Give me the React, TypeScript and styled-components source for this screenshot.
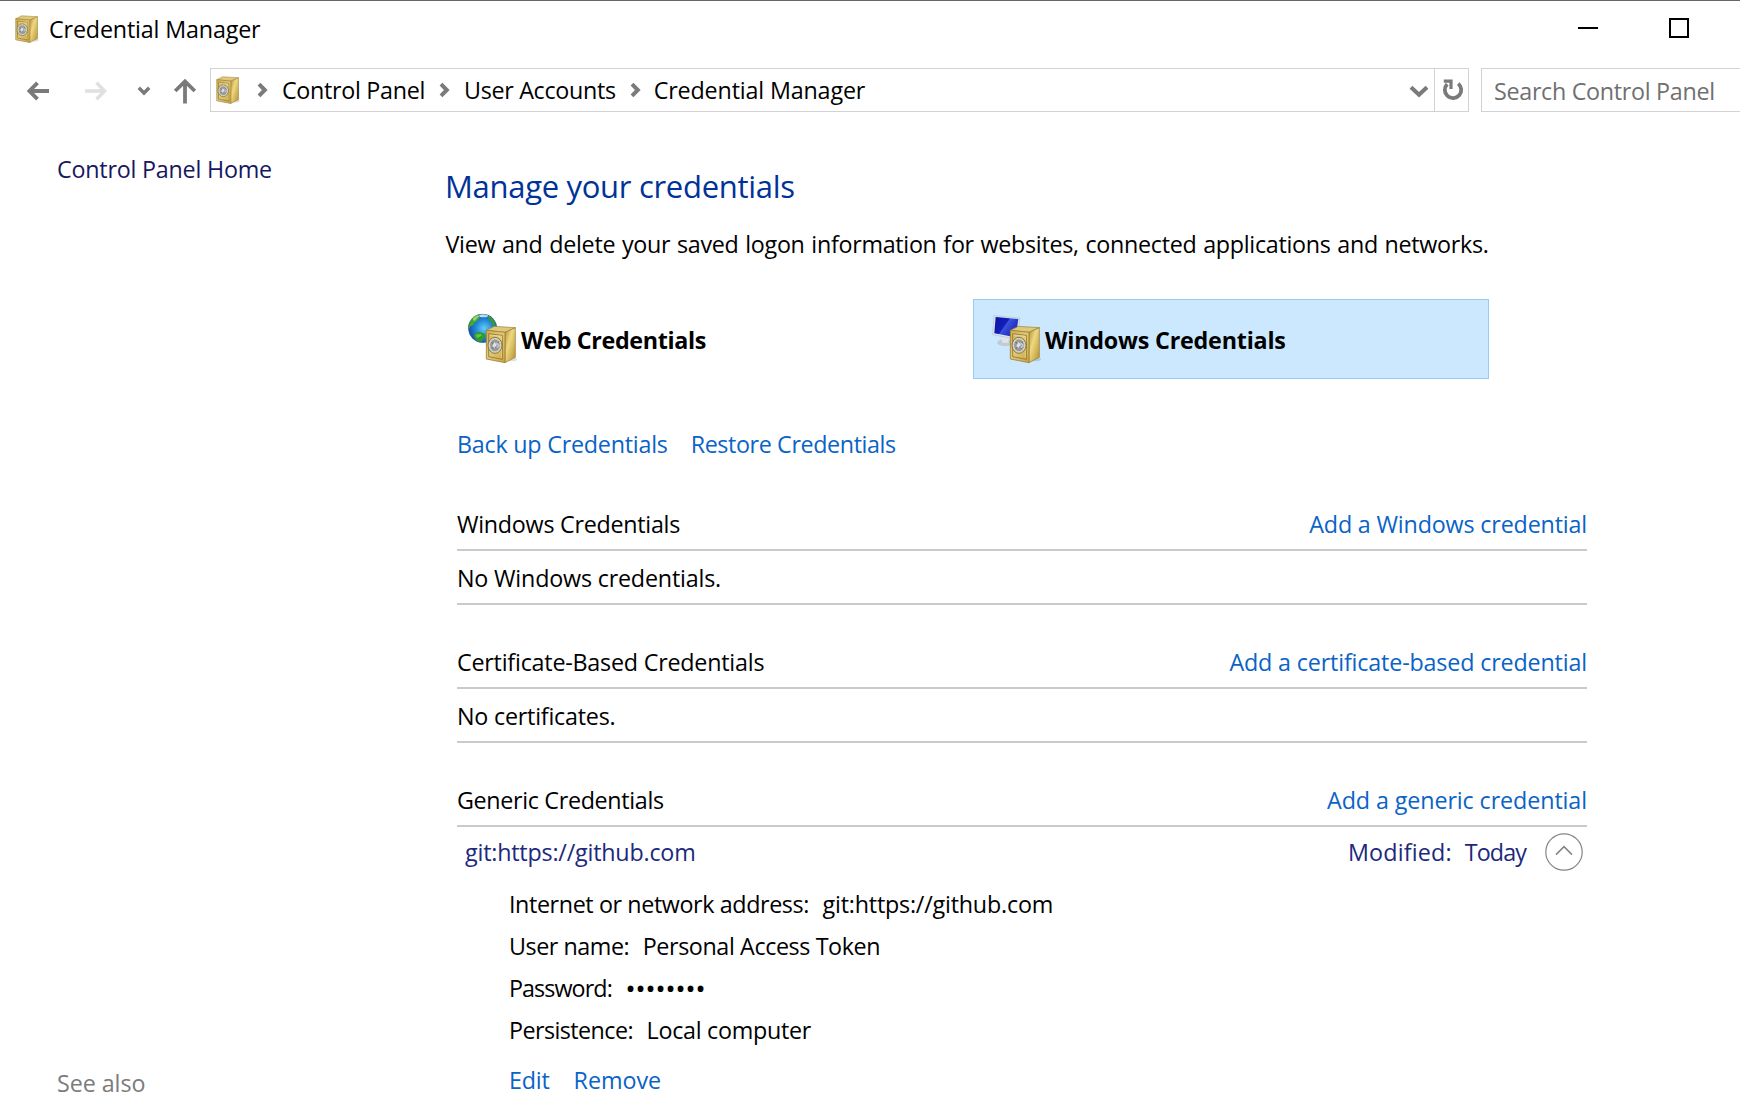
import React from 'react';
import styled, { createGlobalStyle, css } from 'styled-components';

const GlobalStyle = createGlobalStyle`
  * { box-sizing: border-box; }
  html, body { margin: 0; padding: 0; background: #fff; overflow: hidden; }
`;

const Window = styled.div`
  width: 1740px;
  height: 1108px;
  overflow: hidden;
  display: flex;
  flex-direction: column;
  background: #fff;
  border-top: 1px solid #666;
  color: #000;
  font-family: 'Open Sans', 'Noto Sans', sans-serif;
  font-size: 23.3px;
  line-height: 32px;
  white-space: pre;
`;

const Label = styled.span<{ $track?: number; $ml?: number }>`
  letter-spacing: ${(p) => p.$track ?? -0.2}px;
  margin-left: ${(p) => p.$ml ?? 0}px;
`;

const TitleBar = styled.header`
  height: 67px;
  flex: none;
  display: flex;
  align-items: flex-start;
  padding: 12px 51px 0 15px;
`;

const TitleIcon = styled.div`
  display: flex;
  padding-top: 2px;
  margin-right: 9px;
`;

const WindowButtons = styled.div`
  margin-left: auto;
  display: flex;
  gap: 71px;
  padding-top: 5px;
`;

const Minimize = styled.div`
  width: 20px;
  height: 11px;
  border-bottom: 2px solid #000;
`;

const Maximize = styled.div`
  width: 20px;
  height: 20px;
  border: 2px solid #000;
`;

const AddressRow = styled.nav`
  height: 44px;
  flex: none;
  display: flex;
  align-items: stretch;
`;

const NavButtons = styled.div`
  width: 210px;
  flex: none;
  display: flex;
  align-items: center;
  padding: 2px 0 0 26px;
`;

const Glyph = styled.svg<{ $ml?: number; $tone?: string }>`
  display: block;
  flex: none;
  fill: none;
  stroke: ${(p) => p.$tone ?? '#7a7a7a'};
  margin-left: ${(p) => p.$ml ?? 0}px;
`;

const AddressBox = styled.div`
  width: 1259px;
  flex: none;
  display: flex;
  border: 1px solid #d2d2d4;
`;

const Crumbs = styled.div`
  flex: 1;
  display: flex;
  align-items: center;
  padding-left: 5px;
`;

const DropZone = styled.div`
  width: 25px;
  display: flex;
  align-items: center;
  padding-top: 2px;
`;

const RefreshBox = styled.div`
  width: 34px;
  border-left: 1px solid #d2d2d4;
  display: flex;
  align-items: center;
  justify-content: center;
  padding-left: 2px;
`;

const SearchBox = styled.div`
  flex: 1;
  margin-left: 12px;
  border: 1px solid #d2d2d4;
  border-right: none;
  display: flex;
  align-items: center;
  padding: 2px 0 0 12px;
  color: #707070;
`;

const Body = styled.div`
  flex: 1;
  display: flex;
`;

const Sidebar = styled.aside`
  width: 445px;
  flex: none;
  display: flex;
  flex-direction: column;
  justify-content: space-between;
  padding: 41px 0 9px 57px;
`;

const HomeLink = styled.a`
  color: #17175f;
`;

const SeeAlso = styled.div`
  color: #7c7c7c;
`;

const Content = styled.main`
  width: 1142px;
  padding-top: 53px;
`;

const Heading = styled.h1`
  margin: 0;
  font-size: 31px;
  font-weight: 400;
  line-height: 42px;
  color: #003399;
`;

const Intro = styled.p`
  margin: 21px 0 0 0.5px;
  word-spacing: 1px;
`;

const Tiles = styled.div`
  display: flex;
  gap: 8px;
  margin-top: 39px;
  padding-left: 4px;
`;

const Tile = styled.button<{ $active?: boolean }>`
  width: 516px;
  height: 80px;
  display: flex;
  align-items: center;
  padding: 2px 15px 0;
  border: 1px solid transparent;
  background: transparent;
  font: inherit;
  font-weight: 700;
  color: #000;
  ${(p) =>
    p.$active &&
    css`
      background: #cce8ff;
      border-color: #99ccee;
    `}
`;

const TileIcon = styled.div`
  display: flex;
  margin: -4px 2px 0 0;
`;

const Link = styled.a`
  color: #0a63c6;
`;

const Lists = styled.div`
  width: 1130px;
  margin-left: 12px;
`;

const Actions = styled.div`
  display: flex;
  margin-top: 49px;
`;

const Section = styled.section<{ $first?: boolean }>`
  margin-top: ${(p) => (p.$first ? 48 : 41)}px;
`;

const SectionHead = styled.div`
  height: 43px;
  display: flex;
  justify-content: space-between;
  border-bottom: 2px solid #cacaca;
`;

const EmptyRow = styled.div`
  height: 54px;
  padding-top: 11px;
  border-bottom: 2px solid #cacaca;
`;

const CredentialRow = styled.div`
  height: 44px;
  padding: 6px 4px 0 8px;
  display: flex;
  align-items: center;
  color: #20287c;
`;

const Modified = styled.div`
  margin-left: auto;
  display: flex;
  gap: 13px;
  margin-right: 19px;
`;

const Details = styled.div`
  padding: 12px 0 0 52px;
  line-height: 42px;
`;

const Field = styled.div`
  display: flex;
  gap: 13.5px;
`;

const Dots = styled.span`
  font-size: 28px;
  letter-spacing: -0.55px;
`;

const FieldActions = styled.div`
  display: flex;
  gap: 24px;
  margin-top: 13px;
  line-height: 32px;
`;

const SafeArt = () => (
  <g>
    <ellipse cx="140" cy="148" rx="16" ry="6" fill="#000" opacity=".12" />
    <path d="M64 61 L88 49 L151 53 L120 67 Z" fill="#dfc87a" stroke="#9d8138" strokeWidth="2" />
    <path d="M120 67 L151 53 L151 142 L120 158 Z" fill="url(#safeSide)" stroke="#94782f" strokeWidth="2" />
    <path d="M64 61 L120 67 L120 158 L64 147 Z" fill="url(#safeFront)" stroke="#9b7f37" strokeWidth="2.5" />
    <path d="M71 71 L112 76 L112 148 L71 140 Z" fill="none" stroke="#8f7434" strokeWidth="2.5" />
    <path d="M74 75 L109 79 L109 144" fill="none" stroke="#f8eba9" strokeWidth="1.5" />
    <ellipse cx="90" cy="106" rx="21" ry="24" fill="#d9cda4" stroke="#746a4a" strokeWidth="2.5" />
    <ellipse cx="90" cy="106" rx="16" ry="19" fill="#97999a" stroke="#e9e8df" strokeWidth="2.5" strokeDasharray="6 2" />
    <path d="M80 96 L98 117 M101 95 L80 117" stroke="#6c7074" strokeWidth="3" />
    <path d="M88 96 L96 104 L88 114 L82 108 Z" fill="#dfe2e5" />
    <path d="M94 98 L102 106 L95 114" fill="none" stroke="#c9ccd0" strokeWidth="4" />
  </g>
);

const PaintDefs = styled.svg`
  position: absolute;
`;

const SharedPaint = () => (
  <PaintDefs width="0" height="0">
    <defs>
      <linearGradient id="safeFront" x1="0" y1="0" x2="1" y2="1">
        <stop offset="0" stopColor="#cfae50" />
        <stop offset=".45" stopColor="#e2ca78" />
        <stop offset="1" stopColor="#c9a441" />
      </linearGradient>
      <linearGradient id="safeSide" x1="0" y1="0" x2="1" y2="1">
        <stop offset="0" stopColor="#b28f36" />
        <stop offset=".4" stopColor="#eed880" />
        <stop offset="1" stopColor="#b58e2c" />
      </linearGradient>
      <radialGradient id="ocean" cx=".55" cy=".5" r=".6">
        <stop offset="0" stopColor="#63cdf2" />
        <stop offset=".5" stopColor="#2186d8" />
        <stop offset="1" stopColor="#173f9c" />
      </radialGradient>
      <linearGradient id="screen" x1="0" y1="0" x2="1" y2=".6">
        <stop offset="0" stopColor="#0a12a0" />
        <stop offset=".5" stopColor="#1420bb" />
        <stop offset=".52" stopColor="#3a55dc" />
        <stop offset="1" stopColor="#1722b4" />
      </linearGradient>
      <clipPath id="globeClip">
        <circle cx="52" cy="55" r="43" />
      </clipPath>
    </defs>
  </PaintDefs>
);

const SafeIcon = () => (
  <svg width="25" height="28" viewBox="61 46 100 114" preserveAspectRatio="none">
    <SafeArt />
  </svg>
);

const WebIcon = () => (
  <svg width="54" height="56" viewBox="0 0 162 168">
    <circle cx="53" cy="55" r="43" fill="url(#ocean)" />
    <g clipPath="url(#globeClip)">
      <path d="M8 50 Q8 24 34 12 L54 14 Q46 22 42 24 Q40 34 28 38 Q26 48 16 48 Q12 62 8 62 Z" fill="#43a636" />
      <path d="M24 20 Q34 14 44 17 Q36 24 30 32 Q22 34 24 20 Z" fill="#9ad468" />
      <path d="M66 14 Q86 20 92 42 L88 50 Q80 46 78 36 Q68 30 70 24 Z" fill="#35973b" />
      <path d="M26 74 Q36 62 50 68 Q62 70 62 78 Q54 92 46 98 Q30 94 26 74 Z" fill="#2d9a32" />
      <path d="M32 76 Q40 69 52 74 Q44 82 36 84 Z" fill="#62c43f" />
      <ellipse cx="56" cy="17" rx="13" ry="5" fill="#e4f6ff" opacity=".8" />
    </g>
    <circle cx="53" cy="55" r="42.5" fill="none" stroke="#285bab" strokeWidth="1.5" opacity=".7" />
    <SafeArt />
  </svg>
);

const WindowsIcon = () => (
  <svg width="54" height="56" viewBox="0 0 162 168">
    <ellipse cx="48" cy="98" rx="22" ry="9" fill="#c4ccd2" stroke="#a3afb8" />
    <path d="M38 78 L60 82 L58 98 L40 98 Z" fill="#dfe5e9" />
    <path d="M15 17 L93 24 L84 88 L11 74 Z" fill="#dbe5ee" stroke="#a9b7c6" strokeWidth="1.5" />
    <path d="M20 21 L88 27 L80 82 L16 70 Z" fill="url(#screen)" />
    <SafeArt />
  </svg>
);

const CrumbArrow = ({ ml }: { ml: number }) => (
  <Glyph $ml={ml} width="11" height="16" viewBox="0 0 11 16" strokeWidth="4">
    <path d="M2 2.2 L7.8 8 L2 13.8" />
  </Glyph>
);

interface SectionProps {
  title: string;
  track: number;
  ml?: number;
  add: string;
  addTrack: number;
  first?: boolean;
  children: React.ReactNode;
}

const CredentialSection = ({ title, track, ml, add, addTrack, first, children }: SectionProps) => (
  <Section $first={first}>
    <SectionHead>
      <Label $track={track} $ml={ml}>{title}</Label>
      <Link><Label $track={addTrack}>{add}</Label></Link>
    </SectionHead>
    {children}
  </Section>
);

const fields: [string, number, string, number][] = [
  ['Internet or network address:', -0.39, 'git:https://github.com', -0.2],
  ['User name:', -0.45, 'Personal Access Token', -0.4],
  ['Password:', -0.92, '••••••••', 0],
  ['Persistence:', -0.56, 'Local computer', -0.28],
];

export default function App() {
  return (
    <>
      <GlobalStyle />
      <SharedPaint />
      <Window>
        <TitleBar>
          <TitleIcon><SafeIcon /></TitleIcon>
          <Label $track={-0.16}>Credential Manager</Label>
          <WindowButtons>
            <Minimize />
            <Maximize />
          </WindowButtons>
        </TitleBar>

        <AddressRow>
          <NavButtons>
            <Glyph width="24" height="20" viewBox="0 0 24 20" strokeWidth="3.8">
              <path d="M23 10 H4 M11.5 1.8 L3.4 10 L11.5 18.2" />
            </Glyph>
            <Glyph $ml={34} $tone="#e0e0e0" width="24" height="20" viewBox="0 0 24 20" strokeWidth="3.4">
              <path d="M1 10 H20 M12.5 1.8 L20.6 10 L12.5 18.2" />
            </Glyph>
            <Glyph $ml={29} width="14" height="10" viewBox="0 0 14 10" strokeWidth="3.4">
              <path d="M1.8 1.8 L7 7 L12.2 1.8" />
            </Glyph>
            <Glyph $ml={22} width="24" height="26" viewBox="0 0 24 26" strokeWidth="3.8">
              <path d="M12 25.5 V4 M2.2 13 L12 3.4 L21.8 13" />
            </Glyph>
          </NavButtons>
          <AddressBox>
            <Crumbs>
              <SafeIcon />
              <CrumbArrow ml={16} />
              <Label $track={-0.3} $ml={14}>Control Panel</Label>
              <CrumbArrow ml={14} />
              <Label $track={-0.32} $ml={14}>User Accounts</Label>
              <CrumbArrow ml={14} />
              <Label $track={-0.16} $ml={13}>Credential Manager</Label>
            </Crumbs>
            <DropZone>
              <Glyph width="20" height="13" viewBox="0 0 20 13" strokeWidth="4">
                <path d="M2 2.2 L10 9.8 L18 2.2" />
              </Glyph>
            </DropZone>
            <RefreshBox>
              <Glyph width="22" height="24" viewBox="0 0 22 24" strokeWidth="3.8">
                <path d="M16.2 5.6 A8.2 8.2 0 1 1 5.2 6.2" />
                <path d="M1.8 3.2 H9 V11" strokeWidth="3.2" />
              </Glyph>
            </RefreshBox>
          </AddressBox>
          <SearchBox><Label $track={-0.3}>Search Control Panel</Label></SearchBox>
        </AddressRow>

        <Body>
          <Sidebar>
            <HomeLink><Label $track={-0.22}>Control Panel Home</Label></HomeLink>
            <SeeAlso><Label $track={-0.07}>See also</Label></SeeAlso>
          </Sidebar>
          <Content>
            <Heading><Label $track={-0.3}>Manage your credentials</Label></Heading>
            <Intro>
              <Label $track={-0.3}>
                View and delete your saved logon information for websites, connected applications and networks.
              </Label>
            </Intro>
            <Tiles>
              <Tile>
                <TileIcon><WebIcon /></TileIcon>
                <Label $track={-0.33}>Web Credentials</Label>
              </Tile>
              <Tile $active>
                <TileIcon><WindowsIcon /></TileIcon>
                <Label $track={-0.21}>Windows Credentials</Label>
              </Tile>
            </Tiles>
            <Lists>
              <Actions>
                <Link><Label $track={-0.23}>Back up Credentials</Label></Link>
                <Link><Label $track={-0.39} $ml={23}>Restore Credentials</Label></Link>
              </Actions>

              <CredentialSection first title="Windows Credentials" track={-0.27} add="Add a Windows credential" addTrack={-0.17}>
                <EmptyRow><Label $track={-0.19}>No Windows credentials.</Label></EmptyRow>
              </CredentialSection>

              <CredentialSection title="Certificate-Based Credentials" track={-0.22} add="Add a certificate-based credential" addTrack={-0.16}>
                <EmptyRow><Label $track={-0.22}>No certificates.</Label></EmptyRow>
              </CredentialSection>

              <CredentialSection title="Generic Credentials" track={-0.33} add="Add a generic credential" addTrack={-0.1}>
                <CredentialRow>
                  <Label $track={-0.2}>git:https://github.com</Label>
                  <Modified>
                    <Label $track={0.17}>Modified:</Label>
                    <Label $track={-0.9}>Today</Label>
                  </Modified>
                  <Glyph $tone="#858585" width="38" height="38" viewBox="0 0 38 38" strokeWidth="1.2">
                    <circle cx="19" cy="19" r="18.2" />
                    <path d="M11 21.6 L19 13.6 L27 21.6" strokeWidth="1.5" />
                  </Glyph>
                </CredentialRow>
                <Details>
                  {fields.map(([name, nameTrack, value, valueTrack]) => (
                    <Field key={name}>
                      <Label $track={nameTrack}>{name}</Label>
                      {name === 'Password:' ? <Dots>{value}</Dots> : <Label $track={valueTrack}>{value}</Label>}
                    </Field>
                  ))}
                  <FieldActions>
                    <Link><Label $track={-0.2}>Edit</Label></Link>
                    <Link><Label $track={-0.05}>Remove</Label></Link>
                  </FieldActions>
                </Details>
              </CredentialSection>
            </Lists>
          </Content>
        </Body>
      </Window>
    </>
  );
}
